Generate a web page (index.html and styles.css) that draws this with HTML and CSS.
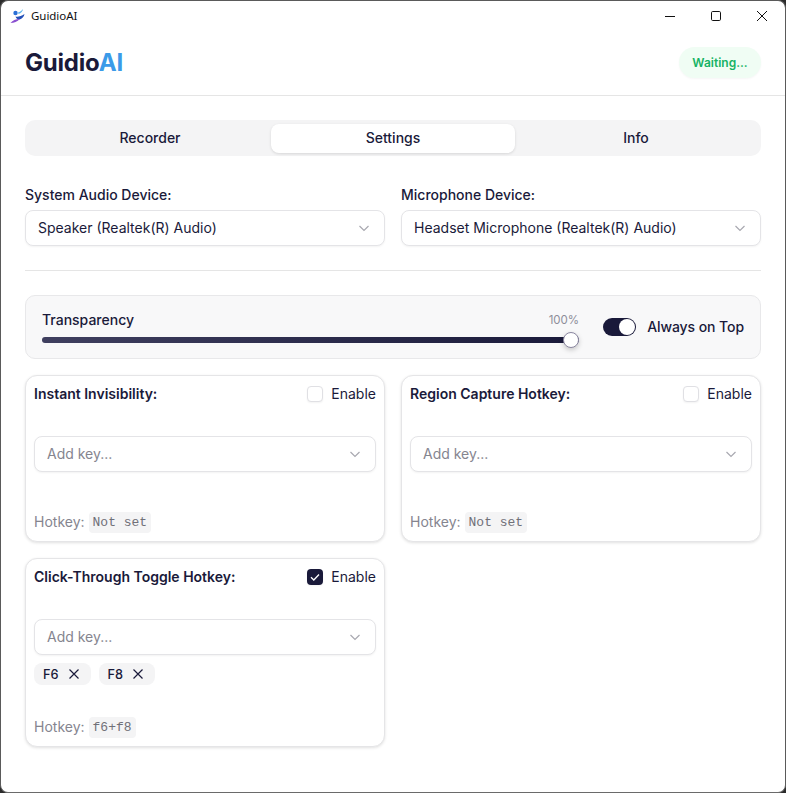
FILE: index.html
```html
<!DOCTYPE html>
<html lang="en">
<head>
<meta charset="utf-8">
<title>GuidioAI</title>
<link rel="stylesheet" href="styles.css">
</head>
<body>
<div class="window">
  <div class="titlebar">
    <div class="title-left">
      <svg class="app-icon" width="16" height="16" viewBox="0 0 16 16">
        <circle cx="5.5" cy="5" r="2.2" fill="#2a6fd6"/>
        <path d="M8 4.5C10 4 11.5 2.8 13 1C13 3.2 11 5.4 8.5 6Z" fill="#5fb6ee"/>
        <path d="M5.5 8.5C8 9.2 11 8.2 14.5 6C14 9 12 10.8 9.5 11.5C8 11.8 6.5 11 5.5 8.5Z" fill="#2451b8"/>
        <path d="M0.5 15C3 12.2 6 10.8 9.8 11C7.5 13.5 4 15 0.5 15Z" fill="#8a4fd0"/>
      </svg>
      <span class="app-name">GuidioAI</span>
    </div>
    <div class="win-controls">
      <svg class="win-btn" width="46" height="30" viewBox="0 0 46 30"><path d="M18 15.5H28" stroke="#111" fill="none"/></svg>
      <svg class="win-btn" width="46" height="30" viewBox="0 0 46 30"><rect x="18.5" y="10.5" width="9" height="9" rx="1.2" stroke="#111" fill="none"/></svg>
      <svg class="win-btn" width="46" height="30" viewBox="0 0 46 30"><path d="M18 10L28 20M28 10L18 20" stroke="#111" fill="none"/></svg>
    </div>
  </div>
  <header class="app-header">
    <h1 class="logo">Guidio<span class="logo-accent">AI</span></h1>
    <div class="status">Waiting...</div>
  </header>
  <main class="content">
    <nav class="tabs">
      <div class="tab">Recorder</div>
      <div class="tab tab-active">Settings</div>
      <div class="tab">Info</div>
    </nav>
    <section class="devices">
      <div class="field">
        <label class="field-label">System Audio Device:</label>
        <div class="select">
          <span>Speaker (Realtek(R) Audio)</span>
          <svg class="chev" width="12" height="12" viewBox="0 0 12 12"><path d="M1.5 4L6 8.5L10.5 4" fill="none" stroke="#a8a8b0" stroke-width="1.2"/></svg>
        </div>
      </div>
      <div class="field">
        <label class="field-label">Microphone Device:</label>
        <div class="select">
          <span>Headset Microphone (Realtek(R) Audio)</span>
          <svg class="chev" width="12" height="12" viewBox="0 0 12 12"><path d="M1.5 4L6 8.5L10.5 4" fill="none" stroke="#a8a8b0" stroke-width="1.2"/></svg>
        </div>
      </div>
    </section>
    <hr class="divider">
    <section class="panel">
      <div class="slider-block">
        <div class="slider-head">
          <span class="slider-label">Transparency</span>
          <span class="slider-value">100%</span>
        </div>
        <div class="track"><div class="thumb"></div></div>
      </div>
      <div class="toggle-row">
        <div class="toggle"><div class="toggle-knob"></div></div>
        <span class="toggle-label">Always on Top</span>
      </div>
    </section>
    <section class="cards">
      <div class="card">
        <div class="card-head">
          <span class="card-title">Instant Invisibility:</span>
          <div class="enable"><span class="check"></span><span class="enable-text">Enable</span></div>
        </div>
        <div class="select select-key">
          <span>Add key...</span>
          <svg class="chev" width="12" height="12" viewBox="0 0 12 12"><path d="M1.5 4L6 8.5L10.5 4" fill="none" stroke="#a8a8b0" stroke-width="1.2"/></svg>
        </div>
        <div class="hotkey">Hotkey: <code class="code">Not set</code></div>
      </div>
      <div class="card">
        <div class="card-head">
          <span class="card-title">Region Capture Hotkey:</span>
          <div class="enable"><span class="check"></span><span class="enable-text">Enable</span></div>
        </div>
        <div class="select select-key">
          <span>Add key...</span>
          <svg class="chev" width="12" height="12" viewBox="0 0 12 12"><path d="M1.5 4L6 8.5L10.5 4" fill="none" stroke="#a8a8b0" stroke-width="1.2"/></svg>
        </div>
        <div class="hotkey">Hotkey: <code class="code">Not set</code></div>
      </div>
      <div class="card card-tall">
        <div class="card-head">
          <span class="card-title">Click-Through Toggle Hotkey:</span>
          <div class="enable">
            <span class="check check-on"><svg width="16" height="16" viewBox="0 0 16 16"><path d="M4 8.2L6.8 11L12 5.5" fill="none" stroke="#fff" stroke-width="1.3"/></svg></span>
            <span class="enable-text">Enable</span>
          </div>
        </div>
        <div class="select select-key">
          <span>Add key...</span>
          <svg class="chev" width="12" height="12" viewBox="0 0 12 12"><path d="M1.5 4L6 8.5L10.5 4" fill="none" stroke="#a8a8b0" stroke-width="1.2"/></svg>
        </div>
        <div class="chips">
          <span class="chip">F6<svg class="chip-x" width="12" height="12" viewBox="0 0 12 12"><path d="M1.5 1.5L10.5 10.5M10.5 1.5L1.5 10.5" fill="none" stroke="#1a1a3a" stroke-width="1.2"/></svg></span>
          <span class="chip">F8<svg class="chip-x" width="12" height="12" viewBox="0 0 12 12"><path d="M1.5 1.5L10.5 10.5M10.5 1.5L1.5 10.5" fill="none" stroke="#1a1a3a" stroke-width="1.2"/></svg></span>
        </div>
        <div class="hotkey">Hotkey: <code class="code">f6+f8</code></div>
      </div>
    </section>
  </main>
</div>
</body>
</html>
```
FILE: styles.css
```css
* { box-sizing: border-box; }
html, body { margin: 0; padding: 0; height: 100%; background: #2b2b2b; overflow: hidden; }
body { font-family: Inter, "Liberation Sans", sans-serif; color: #1a1a3a; }
.window { width: 786px; height: 793px; background: #fff; border-radius: 8px; border: 1px solid #5a5a5a; border-bottom-color: #6a6a6a; overflow: hidden; display: flex; flex-direction: column; }
.titlebar { height: 29px; flex: none; display: flex; justify-content: space-between; align-items: flex-start; }
.title-left { display: flex; align-items: center; gap: 5px; padding: 6px 0 0 9px; }
.app-icon { display: block; }
.app-name { font-family: "Noto Sans", "Open Sans", sans-serif; font-size: 11.5px; letter-spacing: -0.05px; color: #111; line-height: 18px; }
.win-controls { display: flex; }
.win-btn { display: block; }
.app-header { height: 66px; flex: none; display: flex; justify-content: space-between; align-items: center; padding: 0 24px; border-bottom: 1px solid #e5e5e5; }
.logo { margin: 0; font-size: 24px; font-weight: 700; color: #1a1a3a; letter-spacing: -0.2px; }
.logo-accent { color: #3b9ae8; }
.status { height: 31px; width: 82px; display: flex; align-items: center; justify-content: center; border-radius: 16px; background: #f0fdf4; color: #16b364; font-size: 12px; font-weight: 600; box-shadow: 0 1px 2px rgba(0,0,0,.04); }
.content { padding: 24px 24px 0; display: flex; flex-direction: column; }
.tabs { display: grid; grid-template-columns: 1fr 244px 1fr; height: 36px; background: #f4f4f5; border-radius: 10px; padding: 4px 4px 3px; }
.tab { display: flex; align-items: center; justify-content: center; font-size: 14px; font-weight: 500; border-radius: 8px; padding-bottom: 2px; }
.tab-active { background: #fff; box-shadow: 0 1px 3px rgba(0,0,0,.12); }
.devices { display: grid; grid-template-columns: 360px 360px; gap: 16px; margin-top: 29px; }
.field-label { display: block; font-size: 14px; font-weight: 500; line-height: 20px; margin-bottom: 5px; }
.select { display: flex; align-items: center; justify-content: space-between; height: 36px; padding: 0 14px 0 12px; border: 1px solid #e4e4e7; border-radius: 8px; background: #fff; font-size: 14px; box-shadow: 0 1px 2px rgba(0,0,0,.05); }
.select span { padding-bottom: 2px; }
.chev { display: block; flex: none; }
.divider { border: 0; border-top: 1px solid #e5e5e5; margin: 24px 0; height: 0; }
.panel { height: 64px; display: flex; align-items: center; gap: 24px; padding: 0 16px; background: #f8f8f9; border: 1px solid #e8e8ea; border-radius: 10px; }
.slider-block { flex: 1; min-width: 0; }
.slider-head { display: flex; justify-content: space-between; align-items: center; line-height: 17px; margin-top: -1px; }
.slider-label { font-size: 14px; font-weight: 500; }
.slider-value { font-size: 11.5px; color: #8e8e99; padding-top: 2px; }
.track { position: relative; height: 6px; margin-top: 8px; border-radius: 3px; background: linear-gradient(90deg, #3f3f5f, #1a1a3a); }
.thumb { position: absolute; right: 0; top: -5px; width: 16px; height: 16px; border-radius: 50%; background: #fff; border: 1px solid #8a86a0; box-shadow: 0 2px 5px rgba(0,0,0,.2); }
.toggle-row { display: flex; align-items: center; gap: 11px; }
.toggle { width: 33px; height: 18px; border-radius: 9px; background: #1a1a3a; padding: 1px; display: flex; justify-content: flex-end; }
.toggle-knob { width: 16px; height: 16px; border-radius: 50%; background: #fff; }
.toggle-label { font-size: 14px; font-weight: 500; letter-spacing: -0.08px; padding-bottom: 2px; }
.cards { display: grid; grid-template-columns: 360px 360px; gap: 16px; margin-top: 16px; align-items: start; }
.card { height: 167px; padding: 8px; border: 1px solid #e5e5e7; border-radius: 12px; background: #fff; box-shadow: 0 1px 3px rgba(0,0,0,.12); display: flex; flex-direction: column; }
.card-tall { height: 189px; }
.card-head { display: flex; justify-content: space-between; align-items: center; height: 20px; }
.card-title { font-size: 14px; font-weight: 600; padding-bottom: 2px; }
.enable { display: flex; align-items: center; gap: 8px; font-size: 14px; }
.enable-text { padding-bottom: 2px; }
.check { width: 16px; height: 16px; border: 1px solid #e0e0e4; border-radius: 4px; background: #fff; display: block; box-shadow: 0 1px 2px rgba(0,0,0,.05); }
.check-on { background: #1a1a3a; border: 0; }
.check-on svg { display: block; }
.select-key { margin-top: 32px; color: #85858f; }
.chips { display: flex; gap: 8px; margin-top: 8px; }
.chip { display: flex; align-items: center; gap: 9px; height: 22px; padding: 0 11px 0 9px; background: #f4f4f5; border-radius: 8px; font-size: 12.75px; font-weight: 500; }
.chip-x { display: block; }
.hotkey { margin-top: auto; font-size: 14px; color: #85858f; line-height: 22px; display: flex; align-items: center; gap: 4px; }
.code { font-family: "Liberation Mono", "DejaVu Sans Mono", monospace; font-size: 13px; background: #f4f4f5; padding: 2px 4px; border-radius: 4px; color: #707078; line-height: 17px; }
```
